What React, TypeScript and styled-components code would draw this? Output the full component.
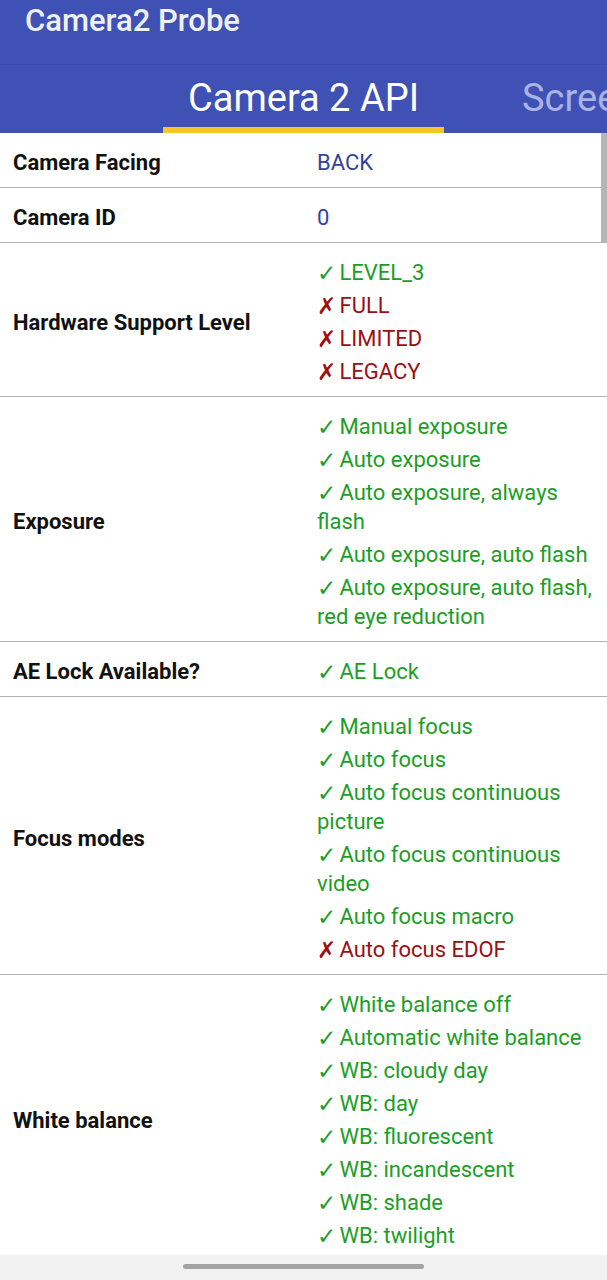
import * as React from 'react';
import styled, { createGlobalStyle } from 'styled-components';

const GlobalStyle = createGlobalStyle`
  html, body {
    margin: 0;
    padding: 0;
    background: #ffffff;
  }
  body {
    font-family: Roboto, 'Liberation Sans', sans-serif;
  }
`;

type Item = { ok: boolean; text: string };

type Row = {
  label: string;
  value?: string;
  items?: Array<Item>;
};

const ok = (text: string): Item => ({ ok: true, text });
const no = (text: string): Item => ({ ok: false, text });

const rows: Array<Row> = [
  { label: 'Camera Facing', value: 'BACK' },
  { label: 'Camera ID', value: '0' },
  {
    label: 'Hardware Support Level',
    items: [ok('LEVEL_3'), no('FULL'), no('LIMITED'), no('LEGACY')],
  },
  {
    label: 'Exposure',
    items: [
      ok('Manual exposure'),
      ok('Auto exposure'),
      ok('Auto exposure, always flash'),
      ok('Auto exposure, auto flash'),
      ok('Auto exposure, auto flash, red eye reduction'),
    ],
  },
  { label: 'AE Lock Available?', items: [ok('AE Lock')] },
  {
    label: 'Focus modes',
    items: [
      ok('Manual focus'),
      ok('Auto focus'),
      ok('Auto focus continuous picture'),
      ok('Auto focus continuous video'),
      ok('Auto focus macro'),
      no('Auto focus EDOF'),
    ],
  },
  {
    label: 'White balance',
    items: [
      ok('White balance off'),
      ok('Automatic white balance'),
      ok('WB: cloudy day'),
      ok('WB: day'),
      ok('WB: fluorescent'),
      ok('WB: incandescent'),
      ok('WB: shade'),
      ok('WB: twilight'),
    ],
  },
];

const Screen = styled.div`
  position: relative;
  width: 607px;
  height: 1280px;
  overflow: hidden;
  display: flex;
  flex-direction: column;
`;

const AppBar = styled.header`
  height: 64px;
  flex: none;
  background: #3f51b5;
  border-bottom: 1px solid #3a4bab;
  display: flex;
  align-items: flex-start;
  padding-left: 25px;
`;

const Title = styled.h1`
  margin: 2px 0 0;
  color: #eef0fa;
  font-size: 31px;
  font-weight: 500;
  line-height: 38px;
`;

const TabStrip = styled.nav`
  height: 68px;
  flex: none;
  background: #3f51b5;
  display: flex;
  padding-left: 163px;
  white-space: nowrap;
`;

const Tab = styled.div<{ $active?: boolean }>`
  position: relative;
  padding: 0 25px;
  margin-left: ${p => (p.$active ? '0' : '53px')};
  display: flex;
  align-items: center;
  padding-bottom: 2px;
  font-size: 38px;
  color: ${p => (p.$active ? '#ffffff' : '#a9b3e4')};
  &::after {
    content: '';
    display: ${p => (p.$active ? 'block' : 'none')};
    position: absolute;
    left: 0;
    right: 0;
    bottom: 0;
    height: 6px;
    background: #f4c623;
  }
`;

const Table = styled.main`
  flex: 1;
  overflow: hidden;
`;

const RowBox = styled.section`
  display: grid;
  grid-template-columns: 317px 282px;
  align-items: center;
  border-bottom: 1px solid #b3b3b3;
  padding: 15px 0 10px;
`;

const Label = styled.div`
  padding-left: 13px;
  font-size: 22px;
  font-weight: 700;
  color: #111111;
`;

const Values = styled.div`
  display: flex;
  flex-direction: column;
  gap: 4px;
`;

const Value = styled.div<{ $tone: 'plain' | 'ok' | 'no' }>`
  font-size: 22px;
  line-height: 29px;
  color: ${p =>
    p.$tone === 'plain' ? '#33429a' : p.$tone === 'ok' ? '#1c9e25' : '#9c0f12'};
`;

const Mark = styled.span`
  display: inline-block;
  vertical-align: top;
  width: 17px;
  height: 29px;
  overflow: visible;
  font-family: 'DejaVu Sans', sans-serif;
  font-size: 23px;
  font-weight: 700;
  line-height: 30px;
`;

const ScrollThumb = styled.div`
  position: absolute;
  right: 0;
  top: 133px;
  width: 6px;
  height: 110px;
  background: #b6b6b6;
`;

const NavBar = styled.footer`
  position: absolute;
  left: 0;
  right: 0;
  bottom: 0;
  height: 25px;
  background: #f2f2f2;
  display: flex;
  justify-content: center;
  padding-top: 9px;
  box-sizing: border-box;
`;

const Handle = styled.div`
  width: 241px;
  height: 5px;
  border-radius: 3px;
  background: #a3a3a3;
`;

function RowView({ row }: { row: Row }) {
  return (
    <RowBox>
      <Label>{row.label}</Label>
      <Values>
        {row.value !== undefined && <Value $tone="plain">{row.value}</Value>}
        {row.items?.map((item, i) => (
          <Value key={i} $tone={item.ok ? 'ok' : 'no'}>
            <Mark>{item.ok ? '✓' : '✗'}</Mark> {item.text}
          </Value>
        ))}
      </Values>
    </RowBox>
  );
}

export default function App() {
  return (
    <Screen>
      <GlobalStyle />
      <AppBar>
        <Title>Camera2 Probe</Title>
      </AppBar>
      <TabStrip>
        <Tab $active>Camera 2 API</Tab>
        <Tab>Screen</Tab>
      </TabStrip>
      <Table>
        {rows.map(row => (
          <RowView key={row.label} row={row} />
        ))}
      </Table>
      <ScrollThumb />
      <NavBar>
        <Handle />
      </NavBar>
    </Screen>
  );
}
